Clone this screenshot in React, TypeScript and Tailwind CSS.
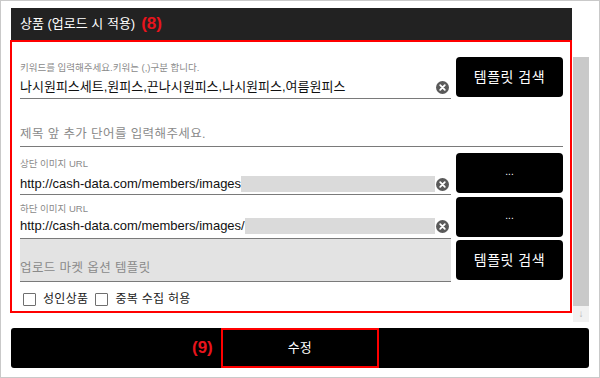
import React from "react";

const FONT = "font-['Liberation_Sans','Noto_Sans_CJK_KR',sans-serif]";

function ClearIcon() {
  return (
    <svg width="13" height="13" viewBox="0 0 13 13" className="shrink-0">
      <circle cx="6.5" cy="6.5" r="6.5" fill="#5a5a5a" />
      <path d="M4.2 4.2 L8.8 8.8 M8.8 4.2 L4.2 8.8" stroke="#fff" strokeWidth="1.8" strokeLinecap="round" />
    </svg>
  );
}

function BlackButton({ children, small }: { children: React.ReactNode; small?: boolean }) {
  return (
    <button
      className={`w-[107px] h-[40px] ml-[5px] shrink-0 rounded-[4px] bg-black text-white flex items-center justify-center ${
        small ? "text-[10px] leading-none pb-[2px]" : "text-[14px] tracking-[0.5px]"
      }`}
    >
      {children}
    </button>
  );
}

function Checkbox({ label }: { label: string }) {
  return (
    <label className="flex items-center gap-[7px]">
      <span className="w-[13px] h-[13px] border border-[#6f6f6f] rounded-[1px] bg-white" />
      <span className="text-[12px] text-[#222] tracking-[0.3px]">{label}</span>
    </label>
  );
}

export default function App() {
  return (
    <div className={`w-[600px] h-[378px] bg-white border border-[#c9c9c9] pl-[9px] pt-[7px] ${FONT}`}>
      {/* Header */}
      <div className="ml-px w-[561px] h-[32px] bg-[#222] flex items-center pl-[9px] gap-[6px]">
        <span className="text-white text-[13px]">상품 (업로드 시 적용)</span>
        <span className="text-[#e8141c] text-[17px] font-bold">(8)</span>
      </div>

      <div className="flex items-start h-[273px]">
        {/* Panel */}
        <div className="w-[562px] h-[273px] border-2 border-[#f00] pl-[8px] pr-[7px] pt-[15px]">
          {/* Keyword row */}
          <div className="flex items-start">
            <div className="w-[431px] h-[42px] border-b border-[#7a7a7a] flex flex-col">
              <div className="text-[9.5px] leading-[12px] text-[#8a8a8a] mt-[5px]">
                키워드를 입력해주세요.키워는 (,)구분 합니다.
              </div>
              <div className="flex items-center mt-[4px] h-[18px]">
                <span className="flex-1 text-[13px] text-[#111] whitespace-nowrap">
                  나시원피스세트,원피스,끈나시원피스,나시원피스,여름원피스
                </span>
                <span className="mr-[2px]"><ClearIcon /></span>
              </div>
            </div>
            <BlackButton>템플릿 검색</BlackButton>
          </div>

          {/* Title prefix */}
          <div className="w-[543px] h-[48px] border-b border-[#7a7a7a] flex items-end pb-[3px]">
            <span className="text-[12.5px] leading-[18px] text-[#8a8a8a] tracking-[0.4px]">제목 앞 추가 단어를 입력해주세요.</span>
          </div>

          {/* Top image URL */}
          <div className="flex items-start mt-[6px]">
            <div className="w-[431px] h-[42px] border-b border-[#7a7a7a] flex flex-col">
              <div className="text-[9.5px] leading-[12px] text-[#8a8a8a] mt-[5px]">상단 이미지 URL</div>
              <div className="flex items-center mt-[5px] h-[18px]">
                <span className="text-[13px] text-[#111] whitespace-nowrap">http://cash-data.com/members/images</span>
                <span className="flex-1 h-[16px] bg-[#dadada]" />
                <span className="ml-[1px] mr-[2px]"><ClearIcon /></span>
              </div>
            </div>
            <BlackButton small>...</BlackButton>
          </div>

          {/* Bottom image URL */}
          <div className="flex items-start mt-px">
            <div className="w-[431px] h-[43px] border-b border-[#7a7a7a] flex flex-col">
              <div className="text-[9.5px] leading-[12px] text-[#8a8a8a] mt-[7px]">하단 이미지 URL</div>
              <div className="flex items-center mt-[2px] h-[18px]">
                <span className="text-[13px] text-[#111] whitespace-nowrap">http://cash-data.com/members/images/</span>
                <span className="flex-1 h-[16px] bg-[#dadada]" />
                <span className="ml-[1px] mr-[2px]"><ClearIcon /></span>
              </div>
            </div>
            <div className="mt-px">
              <BlackButton small>...</BlackButton>
            </div>
          </div>

          {/* Market option template */}
          <div className="flex items-start">
            <div className="w-[431px] h-[43px] bg-[#e3e3e3] border-b border-[#7a7a7a] flex items-end pb-[4px]">
              <span className="text-[12.5px] leading-[18px] text-[#8a8a8a] tracking-[0.4px]">업로드 마켓 옵션 템플릿</span>
            </div>
            <div className="mt-px">
              <BlackButton>템플릿 검색</BlackButton>
            </div>
          </div>

          {/* Checkboxes */}
          <div className="flex items-center gap-[7px] mt-[8px] pl-[3px]">
            <Checkbox label="성인상품" />
            <Checkbox label="중복 수집 허용" />
          </div>
        </div>

        {/* Scrollbar */}
        <div className="ml-px mt-[17px] w-[16px] flex flex-col">
          <div className="h-[249px] bg-[#c9c9c9]" />
          <div className="h-[16px] bg-[#f1f1f1] flex items-center justify-center text-[10px] leading-none text-[#b5b5b5]">↓</div>
        </div>
      </div>

      {/* Submit bar */}
      <div className="ml-px mt-[15px] w-[578px] h-[40px] bg-black rounded-[3px] flex items-stretch pl-[181px]">
        <span className="self-center text-[#e8141c] text-[17px] font-bold mr-[8px]">(9)</span>
        <div className="w-[158px] border-2 border-[#f00] flex items-center justify-center text-white text-[13px]">
          수정
        </div>
      </div>
    </div>
  );
}
